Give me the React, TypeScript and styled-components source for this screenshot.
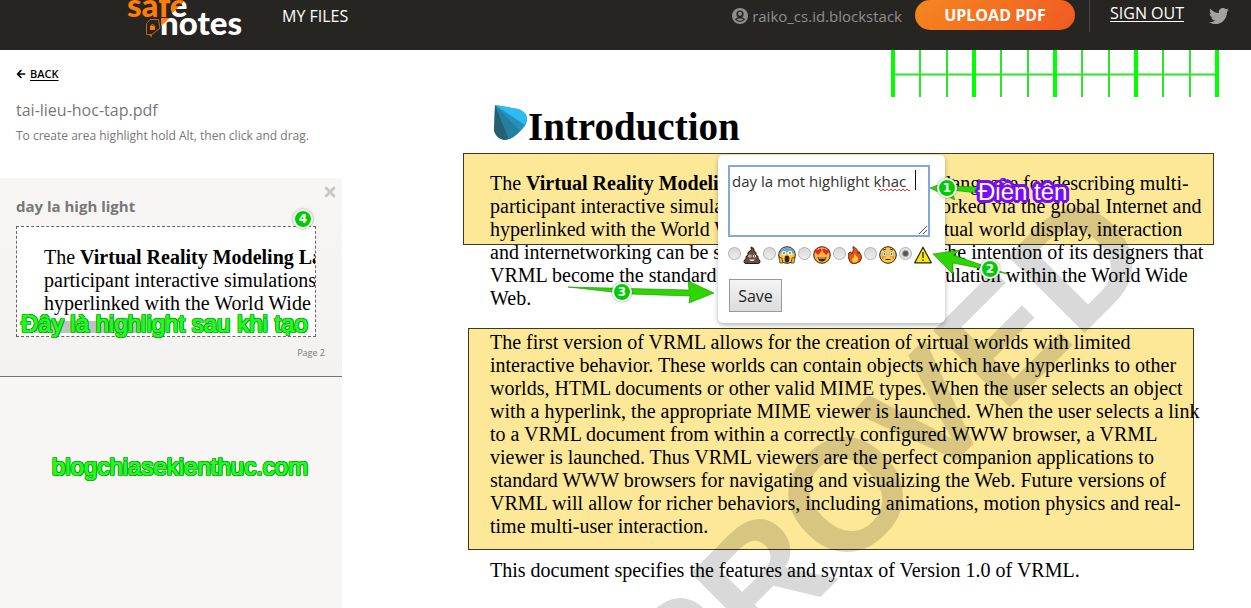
import React from 'react';
import styled, { createGlobalStyle } from 'styled-components';
import { FaArrowLeft, FaTwitter, FaTimes } from 'react-icons/fa';

const GlobalStyle = createGlobalStyle`
  * { box-sizing: border-box; }
  body {
    margin: 0;
    background: #fff;
    color: #777;
    font-family: "Open Sans", "Noto Sans", sans-serif;
    overflow: hidden;
  }
`;

const Header = styled.header`
  display: flex;
  align-items: flex-start;
  height: 50px;
  padding: 0 22px 0 127px;
  background: #262522;
  overflow: hidden;
`;

const LogoLink = styled.a`
  display: block;
  height: 50px;
  svg { display: block; }
`;

const NavLink = styled.a`
  margin-left: 38px;
  color: #fff;
  font-size: 16px;
  line-height: 32px;
  text-decoration: none;
`;

const Account = styled.div`
  display: flex;
  align-items: center;
  gap: 4px;
  height: 32px;
  margin-left: auto;
  color: #8f8e8c;
  font-size: 15px;
`;

const UploadButton = styled.button`
  width: 160px;
  height: 30px;
  margin-left: 13px;
  padding: 0;
  border: 0;
  border-radius: 15px;
  background: linear-gradient(135deg, #f6861f, #f15a22);
  color: #fff;
  font: 700 16px/30px "Open Sans", sans-serif;
`;

const Divider = styled.span`
  width: 1px;
  height: 32px;
  margin: 0 20px 0 14px;
  background: #4c4b49;
`;

const SignOut = styled.a`
  color: #fff;
  font-size: 16px;
  line-height: 26px;
  text-underline-offset: 2px;
`;

const SocialLink = styled.a`
  height: 32px;
  margin-left: 25px;
  color: #a3a2a0;
  svg { display: block; margin-top: 6px; }
`;

const Layout = styled.div`
  display: flex;
  position: relative;
  height: calc(100vh - 50px);
`;

const Sidebar = styled.aside`
  flex: 0 0 342px;
  background: #f7f6f5;
`;

const Intro = styled.div`
  height: 128px;
  padding: 16px;
  background: #fff;
`;

const BackLink = styled.a`
  display: flex;
  align-items: center;
  gap: 4px;
  width: max-content;
  color: #000;
  font-size: 11px;
  font-weight: 600;
  line-height: 16px;
  text-decoration: none;
  span { text-decoration: underline; text-underline-offset: 2px; }
`;

const FileName = styled.h1`
  margin: 16px 0 0;
  font-size: 16px;
  font-weight: 400;
  line-height: 24px;
`;

const Hint = styled.p`
  margin: 4px 0 0;
  font-size: 12px;
  line-height: 20px;
  white-space: nowrap;
`;

const HighlightItem = styled.article`
  position: relative;
  height: 199px;
  padding: 16px;
  border-bottom: 1px solid #747474;
  background: linear-gradient(#f7f6f5, #f3f2f0);
`;

const ItemTitle = styled.h2`
  margin: 0 0 8px;
  font-size: 15px;
  font-weight: 700;
  line-height: 24px;
`;

const CloseButton = styled.button`
  position: absolute;
  top: 6px;
  right: 4px;
  padding: 0;
  border: 0;
  background: none;
  color: #c9c8c7;
  svg { display: block; }
`;

const Snapshot = styled.div`
  width: 300px;
  height: 111px;
  padding: 19px 0 0 27px;
  border: 1px dashed #666;
  background: #fff;
  overflow: hidden;
`;

const TextLine = styled.span`
  display: block;
  white-space: nowrap;
`;

const DocText = styled.p`
  position: relative;
  z-index: 2;
  margin: 0;
  color: #000;
  font: 20px/23px "Liberation Serif", serif;
`;

const ScrollThumb = styled.div`
  width: 105px;
  height: 12px;
  margin: 6px 0 0 -10px;
  background: #c1c1c1;
`;

const PageLabel = styled.div`
  padding: 8px 1px 0 0;
  font-size: 9px;
  line-height: 16px;
  text-align: right;
`;

const Viewer = styled.main`
  position: relative;
  flex: 1;
  padding-left: 148px;
  background: #fff;
  overflow: hidden;
`;

const Ruler = styled.svg`
  display: block;
  margin: 0 32px 0 auto;
`;

const DocHeading = styled.h2`
  display: flex;
  align-items: center;
  height: 60px;
  margin: 0 0 15px;
  padding-left: 3px;
  color: #000;
  font: 700 39px/60px "Liberation Serif", serif;
  svg { margin-top: -8px; }
`;

const Section = styled.section`
  position: relative;
  margin-bottom: 21px;
`;

const Marker = styled.div<{ $top: number; $left: number; $width: number; $height: number }>`
  position: absolute;
  top: ${p => p.$top}px;
  left: ${p => p.$left}px;
  width: ${p => p.$width}px;
  height: ${p => p.$height}px;
  border: 1px solid #3c3828;
  background: #fde897;
`;

const Watermark = styled.div`
  position: absolute;
  z-index: 1;
  right: 132px;
  top: 92px;
  color: rgba(0, 0, 0, 0.15);
  font: 700 158px/158px "Liberation Sans", sans-serif;
  transform: rotate(-45deg);
  transform-origin: 100% 50%;
  pointer-events: none;
`;

const Popup = styled.form`
  position: absolute;
  z-index: 3;
  top: 105px;
  left: 376px;
  width: 227px;
  height: 168px;
  padding: 10px;
  border-radius: 5px;
  background: #fff;
  box-shadow: 0 2px 5px rgba(0, 0, 0, 0.3);
`;

const NoteField = styled.div`
  position: relative;
  height: 72px;
  svg { position: absolute; left: 0; top: 0; pointer-events: none; }
`;

const NoteInput = styled.textarea`
  display: block;
  width: 202px;
  height: 72px;
  padding: 3px 2px;
  border: 2px solid #82a7dd;
  outline: 0;
  background: #fff;
  color: #333;
  font: 15px/22px "Open Sans", sans-serif;
  resize: none;
`;

const Options = styled.div`
  display: flex;
  align-items: center;
  height: 22px;
  margin-top: 6px;
`;

const Option = styled.label`
  display: flex;
  align-items: center;
  gap: 2px;
  margin-right: 2px;
  svg { display: block; margin-top: 2px; }
`;

const Radio = styled.input`
  appearance: none;
  flex: none;
  width: 13px;
  height: 13px;
  margin: 0 0 2px;
  border: 1px solid #b0b0b0;
  border-radius: 50%;
  background: linear-gradient(#d8d8d8, #eee);
  &:checked { background: radial-gradient(circle, #555 0 2px, #e4e4e4 4px); }
`;

const SaveButton = styled.button`
  display: block;
  width: 53px;
  height: 33px;
  margin: 14px 0 0 1px;
  padding: 0;
  border: 1px solid #999;
  background: linear-gradient(#f4f4f4, #dcdcdc);
  color: #222;
  font: 16px/30px "Open Sans", sans-serif;
`;

const Note = styled.div<{ $x: number; $y: number }>`
  position: absolute;
  z-index: 5;
  left: ${p => p.$x}px;
  top: ${p => p.$y}px;
  color: #1dff1d;
  font: 24px/28px "Liberation Sans", sans-serif;
  white-space: nowrap;
  -webkit-text-stroke: 1px #1dff1d;
  text-shadow:
    1px 0 #078a07, -1px 0 #078a07, 0 1px #078a07, 0 -1px #078a07,
    1px 1px #078a07, -1px 1px #078a07, 1px -1px #078a07, -1px -1px #078a07;
`;

const NameNote = styled(Note)`
  color: #fff;
  -webkit-text-stroke: 0;
  text-shadow:
    3px 0 #7a0cf0, -3px 0 #7a0cf0, 0 3px #7a0cf0, 0 -3px #7a0cf0,
    2px 2px #7a0cf0, -2px 2px #7a0cf0, 2px -2px #7a0cf0, -2px -2px #7a0cf0,
    3px 1px #7a0cf0, -3px 1px #7a0cf0, 3px -1px #7a0cf0, -3px -1px #7a0cf0,
    1px 3px #7a0cf0, -1px 3px #7a0cf0, 1px -3px #7a0cf0, -1px -3px #7a0cf0;
`;

const Arrow = styled.svg<{ $x: number; $y: number }>`
  position: absolute;
  z-index: 4;
  left: ${p => p.$x}px;
  top: ${p => p.$y}px;
`;

const Badge = styled.span<{ $x: number; $y: number }>`
  position: absolute;
  z-index: 6;
  left: ${p => p.$x}px;
  top: ${p => p.$y}px;
  width: 20px;
  height: 20px;
  border: 2px solid #fff;
  border-radius: 50%;
  background: #0c0;
  box-shadow: 0 0 2px rgba(0, 0, 0, 0.5);
  color: #fff;
  font: 700 12px/16px "DejaVu Sans", sans-serif;
  text-align: center;
`;

const Logo = () => (
  <svg width="117" height="50" viewBox="0 0 117 50" role="img" aria-label="safe notes">
    <defs>
      <linearGradient id="split" gradientUnits="userSpaceOnUse" x1="42" y1="0" x2="58" y2="16">
        <stop offset="0.5" stopColor="#ff7d0a" />
        <stop offset="0.5" stopColor="#fff" />
      </linearGradient>
    </defs>
    <g fontFamily="Lato, sans-serif" fontWeight="900">
      <text x="0" y="17" fontSize="33" fill="#ff7d0a">saf<tspan fill="url(#split)">e</tspan></text>
      <text x="33" y="35" fontSize="33" fill="#fff">notes</text>
    </g>
    <path d="M34 18h9l-9 8z" fill="#ff7d0a" />
    <g fill="none" stroke="#c9650f" strokeWidth="1">
      <path d="M23 19.500h8.500L33 28l-8 6.500h-5.500v-11z" />
      <path d="M24 27v-1.500q1.500-2 3 0V27" stroke="#ff7d0a" />
    </g>
    <rect x="23" y="26" width="5" height="4" fill="#ff7d0a" />
    <path d="M20 34.500h5v3l-2-2z" fill="#c9650f" />
  </svg>
);

const AccountIcon = () => (
  <svg width="16" height="16" viewBox="0 0 16 16" aria-hidden="true">
    <circle cx="8" cy="8" r="8" fill="currentColor" />
    <circle cx="8" cy="6" r="3.600" fill="#262522" />
    <circle cx="8" cy="5.800" r="2" fill="currentColor" />
    <path d="M2.800 11.200Q5 9 8 9t5.200 2.200Q11.200 14 8 14t-5.200-2.800z" fill="#262522" />
    <path d="M4.300 11.500Q6 10.500 8 10.500t3.700 1Q10 12.800 8 12.800t-3.700-1.300z" fill="currentColor" />
  </svg>
);

const Poop = () => (
  <svg width="18" height="18" viewBox="0 0 18 18">
    <path d="M8 1q4 1 3 4 3 1 2 4 3 1 2 4 2 .5 2 2.500 0 2-2 2H3q-2 0-2-2T3 13q-1-3 2-4-1-3 2-4 2-1 1-4z" fill="#6d4a3f" stroke="#2a1a15" />
    <circle cx="7" cy="10" r="1.600" fill="#fff" /><circle cx="11.500" cy="10" r="1.600" fill="#fff" />
    <circle cx="7" cy="10" r=".7" /><circle cx="11.500" cy="10" r=".7" />
    <path d="M6 13.500h6q-3 3-6 0z" fill="#fff" />
  </svg>
);

const Scream = () => (
  <svg width="18" height="18" viewBox="0 0 18 18">
    <circle cx="9" cy="9" r="8.300" fill="#ffc83d" stroke="#222" />
    <path d="M1.200 8a8 8 0 0 1 15.600 0q-3-2-7.800-2T1.200 8z" fill="#58a9e8" />
    <circle cx="6" cy="7" r="2.200" fill="#fff" /><circle cx="12" cy="7" r="2.200" fill="#fff" />
    <circle cx="6" cy="7" r=".8" /><circle cx="12" cy="7" r=".8" />
    <ellipse cx="9" cy="13" rx="2.400" ry="3.400" fill="#3a1f14" />
    <path d="M1 11l3 1 1 5H2zM17 11l-3 1-1 5h3z" fill="#ffb02e" stroke="#5a3a10" strokeWidth=".8" />
  </svg>
);

const HeartEyes = () => (
  <svg width="18" height="18" viewBox="0 0 18 18">
    <circle cx="9" cy="9" r="8.300" fill="#ffb52e" stroke="#222" />
    <path d="M5 9L1.500 5.500Q1 3 3 3l2 1 1.500-1.500q2.500 0 2 2.500zM13 9L9.500 5Q9 2.500 11.500 2.500L13 4l2-1q2 0 1.500 2.500z" fill="#e8232e" />
    <path d="M4.500 11h9q-1 4.500-4.500 4.500T4.500 11z" fill="#3a1f14" />
    <path d="M5.500 11.500h7v1h-7z" fill="#fff" />
  </svg>
);

const Fire = () => (
  <svg width="14" height="18" viewBox="0 0 14 18">
    <path d="M5 .5q5 2 5 7l1-2q3 4 2.500 7T8 17.500 .8 13 3 6l1 2q2-4 1-7.500z" fill="#e8501c" stroke="#4a1808" strokeWidth=".8" />
    <path d="M7 7q0 3 3 4.500.8 5-3 5T4 12q1 1 1.500 0Q6 9 7 7z" fill="#ffc83d" />
  </svg>
);

const Flushed = () => (
  <svg width="18" height="18" viewBox="0 0 18 18">
    <circle cx="9" cy="9" r="8.300" fill="#ffc83d" stroke="#222" />
    <circle cx="4" cy="11.500" r="1.500" fill="#f88c3a" /><circle cx="14" cy="11.500" r="1.500" fill="#f88c3a" />
    <circle cx="5.500" cy="8" r="2.300" fill="#fff" stroke="#777" strokeWidth=".5" />
    <circle cx="12.500" cy="8" r="2.300" fill="#fff" stroke="#777" strokeWidth=".5" />
    <circle cx="5.500" cy="8" r=".8" /><circle cx="12.500" cy="8" r=".8" />
    <path d="M6.500 13.500h5M4 4l3-1M11 3l3 1" stroke="#3a1f14" />
  </svg>
);

const Warning = () => (
  <svg width="18" height="18" viewBox="0 0 18 18">
    <path d="M9 1.200L17.300 16.800H.7z" fill="#ffe600" stroke="#222" strokeWidth="1.200" strokeLinejoin="round" />
    <path d="M9 6v6M9 13.500v1.500" stroke="#222" strokeWidth="1.300" />
  </svg>
);

const reactions = [
  { name: 'Poop', Icon: Poop },
  { name: 'Scream', Icon: Scream },
  { name: 'Love', Icon: HeartEyes },
  { name: 'Fire', Icon: Fire },
  { name: 'Flushed', Icon: Flushed },
  { name: 'Warning', Icon: Warning },
];

const secondParagraph = [
  'The first version of VRML allows for the creation of virtual worlds with limited',
  'interactive behavior. These worlds can contain objects which have hyperlinks to other',
  'worlds, HTML documents or other valid MIME types. When the user selects an object',
  'with a hyperlink, the appropriate MIME viewer is launched. When the user selects a link',
  'to a VRML document from within a correctly configured WWW browser, a VRML',
  'viewer is launched. Thus VRML viewers are the perfect companion applications to',
  'standard WWW browsers for navigating and visualizing the Web. Future versions of',
  'VRML will allow for richer behaviors, including animations, motion physics and real-',
  'time multi-user interaction.',
];

export default function App() {
  return (
    <>
      <GlobalStyle />
      <Header>
        <LogoLink href="#"><Logo /></LogoLink>
        <NavLink href="#">MY FILES</NavLink>
        <Account><AccountIcon /><span>raiko_cs.id.blockstack</span></Account>
        <UploadButton type="button">UPLOAD PDF</UploadButton>
        <Divider />
        <SignOut href="#">SIGN OUT</SignOut>
        <SocialLink href="#" aria-label="Twitter"><FaTwitter size={20} /></SocialLink>
      </Header>
      <Layout>
        <Sidebar>
          <Intro>
            <BackLink href="#"><FaArrowLeft size={10} /><span>BACK</span></BackLink>
            <FileName>tai-lieu-hoc-tap.pdf</FileName>
            <Hint>To create area highlight hold Alt, then click and drag.</Hint>
          </Intro>
          <HighlightItem>
            <CloseButton type="button" aria-label="Remove highlight"><FaTimes size={16} /></CloseButton>
            <ItemTitle>day la high light</ItemTitle>
            <Snapshot>
              <DocText>
                <TextLine>The <b>Virtual Reality Modeling Language</b></TextLine>
                <TextLine>participant interactive simulations</TextLine>
                <TextLine>hyperlinked with the World Wide</TextLine>
              </DocText>
              <ScrollThumb />
            </Snapshot>
            <PageLabel>Page 2</PageLabel>
          </HighlightItem>
        </Sidebar>
        <Viewer>
          <Ruler width="328" height="47" viewBox="0 0 328 47">
            <path d="M0 24.500h328" stroke="#2be52b" strokeWidth="2" />
            {Array.from({ length: 13 }, (_, i) => (
              <path key={i} d={`M${2 + i * 27} 0v47`} stroke={i % 3 ? '#2be52b' : '#0f0'} strokeWidth={i % 3 ? 2 : 4} />
            ))}
          </Ruler>
          <DocHeading>
            <svg width="35" height="37" viewBox="0 0 35 37">
              <path d="M2 0l23 4q9 3 9 10 0 7-9 14-7 7-13 7Q4 34 1 26z" fill="#2492bd" />
              <path d="M2 0l23 4q9 3 9 10l-2 6z" fill="#2dbbf0" />
              <path d="M2 0L1 26q3 8 10 9l5-1z" fill="#24606f" />
              <path d="M2 0l14 34q6-2 11-8z" fill="#267f9f" />
            </svg>
            Introduction
          </DocHeading>
          <Section>
            <Marker $top={-19} $left={-27} $width={751} $height={92} />
            <DocText>
              <TextLine>The <b>Virtual Reality Modeling Language (VRML)</b> is a language for describing multi-</TextLine>
              <TextLine>participant interactive simulations -- virtual worlds networked via the global Internet and</TextLine>
              <TextLine>hyperlinked with the World Wide Web. All aspects of virtual world display, interaction</TextLine>
              <TextLine>and internetworking can be specified using VRML. It is the intention of its designers that</TextLine>
              <TextLine>VRML become the standard language for interactive simulation within the World Wide</TextLine>
              <TextLine>Web.</TextLine>
            </DocText>
          </Section>
          <Section>
            <Marker $top={-3} $left={-22} $width={726} $height={222} />
            <DocText>
              {secondParagraph.map(line => <TextLine key={line}>{line}</TextLine>)}
            </DocText>
          </Section>
          <DocText>
            <TextLine>This document specifies the features and syntax of Version 1.0 of VRML.</TextLine>
          </DocText>
          <Watermark aria-hidden="true">APPROVED</Watermark>
          <Popup onSubmit={e => e.preventDefault()}>
            <NoteField>
              <NoteInput aria-label="Highlight note" spellCheck={false} defaultValue="day la mot highlight khac " />
              <svg width="202" height="72" viewBox="0 0 202 72" fill="none">
                <path d="M150 25q1-2 2 0t2 0 2 0 2 0 2 0 2 0 2 0 2 0 2 0 2 0 2 0 2 0 2 0 2 0 2 0 2 0" stroke="#e33" />
                <path d="M187.500 5v20" stroke="#111" />
                <path d="M191 69l8-8M195 69l4-4" stroke="#555" />
              </svg>
            </NoteField>
            <Options role="radiogroup" aria-label="Reaction">
              {reactions.map(({ name, Icon }) => (
                <Option key={name}>
                  <Radio type="radio" name="reaction" aria-label={name} defaultChecked={name === 'Warning'} />
                  <Icon />
                </Option>
              ))}
            </Options>
            <SaveButton type="submit">Save</SaveButton>
          </Popup>
        </Viewer>

        <Arrow $x={930} $y={128} width="50" height="24" viewBox="0 0 50 24">
          <path d="M0 10L24 1l-3 7 27 1v6l-27-3 4 10z" fill="#2ed600" stroke="#168a00" strokeWidth=".6" />
        </Arrow>
        <Arrow $x={932} $y={196} width="80" height="36" viewBox="0 0 80 36">
          <path d="M1 8L28 4l-7 5 55 19-55-11 0 11z" fill="#2ed600" stroke="#168a00" strokeWidth=".6" />
        </Arrow>
        <Arrow $x={567} $y={230} width="150" height="26" viewBox="0 0 150 26">
          <path d="M1 7l121 3-1-9 26 12-25 10 1-7-60-2z" fill="#2ed600" stroke="#168a00" strokeWidth=".6" />
        </Arrow>
        <Badge $x={937} $y={128}>1</Badge>
        <Badge $x={980} $y={209}>2</Badge>
        <Badge $x={612} $y={232}>3</Badge>
        <Badge $x={293} $y={159}>4</Badge>
        <NameNote $x={978} $y={128}>Điền tên</NameNote>
        <Note $x={21} $y={260}>Đây là highlight sau khi tạo</Note>
        <Note $x={52} $y={403}>blogchiasekienthuc.com</Note>
      </Layout>
    </>
  );
}
